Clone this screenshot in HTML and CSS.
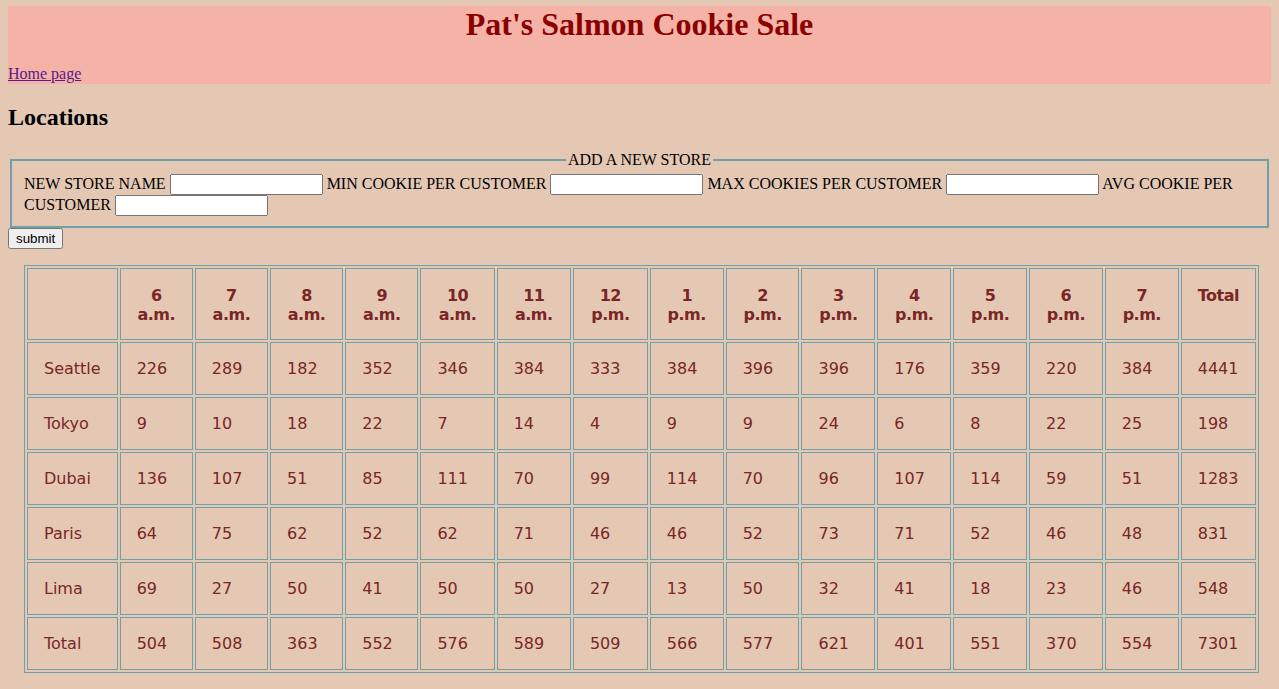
FILE: index.html
```html
<!DOCTYPE html>
<html>
<head>
<meta charset="utf-8">
<title>Pat's Salmon Cookie Sale</title>
<link rel="stylesheet" href="styles.css">
</head>
<body>
<header class="site-header">
  <h1 class="site-title">Pat's Salmon Cookie Sale</h1>
  <nav class="site-nav"><a href="#" class="home-link">Home page</a></nav>
</header>
<main>
  <h2 class="section-title">Locations</h2>
  <form class="store-form">
    <fieldset class="store-fieldset">
      <legend class="store-legend">ADD A NEW STORE</legend>
      <label>NEW STORE NAME <input type="text"></label>
      <label>MIN COOKIE PER CUSTOMER <input type="text"></label>
      <label>MAX COOKIES PER CUSTOMER <input type="text"></label>
      <label>AVG COOKIE PER CUSTOMER <input type="text"></label>
    </fieldset>
    <button type="submit" class="submit-btn">submit</button>
  </form>
  <table class="sales-table">
    <thead>
      <tr>
        <th></th>
        <th>6 a.m.</th><th>7 a.m.</th><th>8 a.m.</th><th>9 a.m.</th><th>10 a.m.</th><th>11 a.m.</th><th>12 p.m.</th>
        <th>1 p.m.</th><th>2 p.m.</th><th>3 p.m.</th><th>4 p.m.</th><th>5 p.m.</th><th>6 p.m.</th><th>7 p.m.</th>
        <th>Total</th>
      </tr>
    </thead>
    <tbody>
      <tr><td>Seattle</td><td>226</td><td>289</td><td>182</td><td>352</td><td>346</td><td>384</td><td>333</td><td>384</td><td>396</td><td>396</td><td>176</td><td>359</td><td>220</td><td>384</td><td>4441</td></tr>
      <tr><td>Tokyo</td><td>9</td><td>10</td><td>18</td><td>22</td><td>7</td><td>14</td><td>4</td><td>9</td><td>9</td><td>24</td><td>6</td><td>8</td><td>22</td><td>25</td><td>198</td></tr>
      <tr><td>Dubai</td><td>136</td><td>107</td><td>51</td><td>85</td><td>111</td><td>70</td><td>99</td><td>114</td><td>70</td><td>96</td><td>107</td><td>114</td><td>59</td><td>51</td><td>1283</td></tr>
      <tr><td>Paris</td><td>64</td><td>75</td><td>62</td><td>52</td><td>62</td><td>71</td><td>46</td><td>46</td><td>52</td><td>73</td><td>71</td><td>52</td><td>46</td><td>48</td><td>831</td></tr>
      <tr><td>Lima</td><td>69</td><td>27</td><td>50</td><td>41</td><td>50</td><td>50</td><td>27</td><td>13</td><td>50</td><td>32</td><td>41</td><td>18</td><td>23</td><td>46</td><td>548</td></tr>
    </tbody>
    <tfoot>
      <tr><td>Total</td><td>504</td><td>508</td><td>363</td><td>552</td><td>576</td><td>589</td><td>509</td><td>566</td><td>577</td><td>621</td><td>401</td><td>551</td><td>370</td><td>554</td><td>7301</td></tr>
    </tfoot>
  </table>
</main>
</body>
</html>
```

FILE: styles.css
```css
html {
  background: #e4c8b4;
}

body {
  margin: 6px 8px 8px;
  font-family: "Liberation Serif", "Times New Roman", serif;
  font-size: 16px;
  color: #000;
  background: #e4c8b4;
}

.site-header {
  background: #f5b2a6;
  padding-bottom: 1px;
}

.site-title {
  margin: 0 0 22px;
  text-align: center;
  font-size: 32px;
  color: #8b0000;
}

.site-nav {
  margin: 0;
}

.home-link {
  color: #551a8b;
}

.section-title {
  font-size: 24px;
  margin: 20px 0 20px;
}

.store-form {
  margin: 0;
}

.store-fieldset {
  margin: 0 2px;
  padding: 5px 12px 10px;
  border: 2px solid #6fa2a8;
}

.store-legend {
  margin: 0 auto;
  padding: 0 2px;
}

.store-fieldset input {
  box-sizing: border-box;
  width: 153px;
  height: 21px;
  font-size: 13.33px;
  vertical-align: baseline;
}

.submit-btn {
  font-family: "Liberation Sans", Arial, sans-serif;
  font-size: 13.33px;
}

.sales-table {
  margin: 16px 12px 0 16px;
  border: 1px solid #6fa2a8;
  border-spacing: 2px;
  font-family: "DejaVu Sans", Verdana, sans-serif;
  font-size: 16px;
  color: #7a2626;
}

.sales-table th,
.sales-table td {
  border: 1px solid #6fa2a8;
  padding: 16px;
  vertical-align: top;
}

.sales-table th {
  text-align: center;
  font-weight: bold;
  letter-spacing: -0.5px;
  padding: 17px 16px 15px;
}

.sales-table td {
  text-align: left;
}
```
